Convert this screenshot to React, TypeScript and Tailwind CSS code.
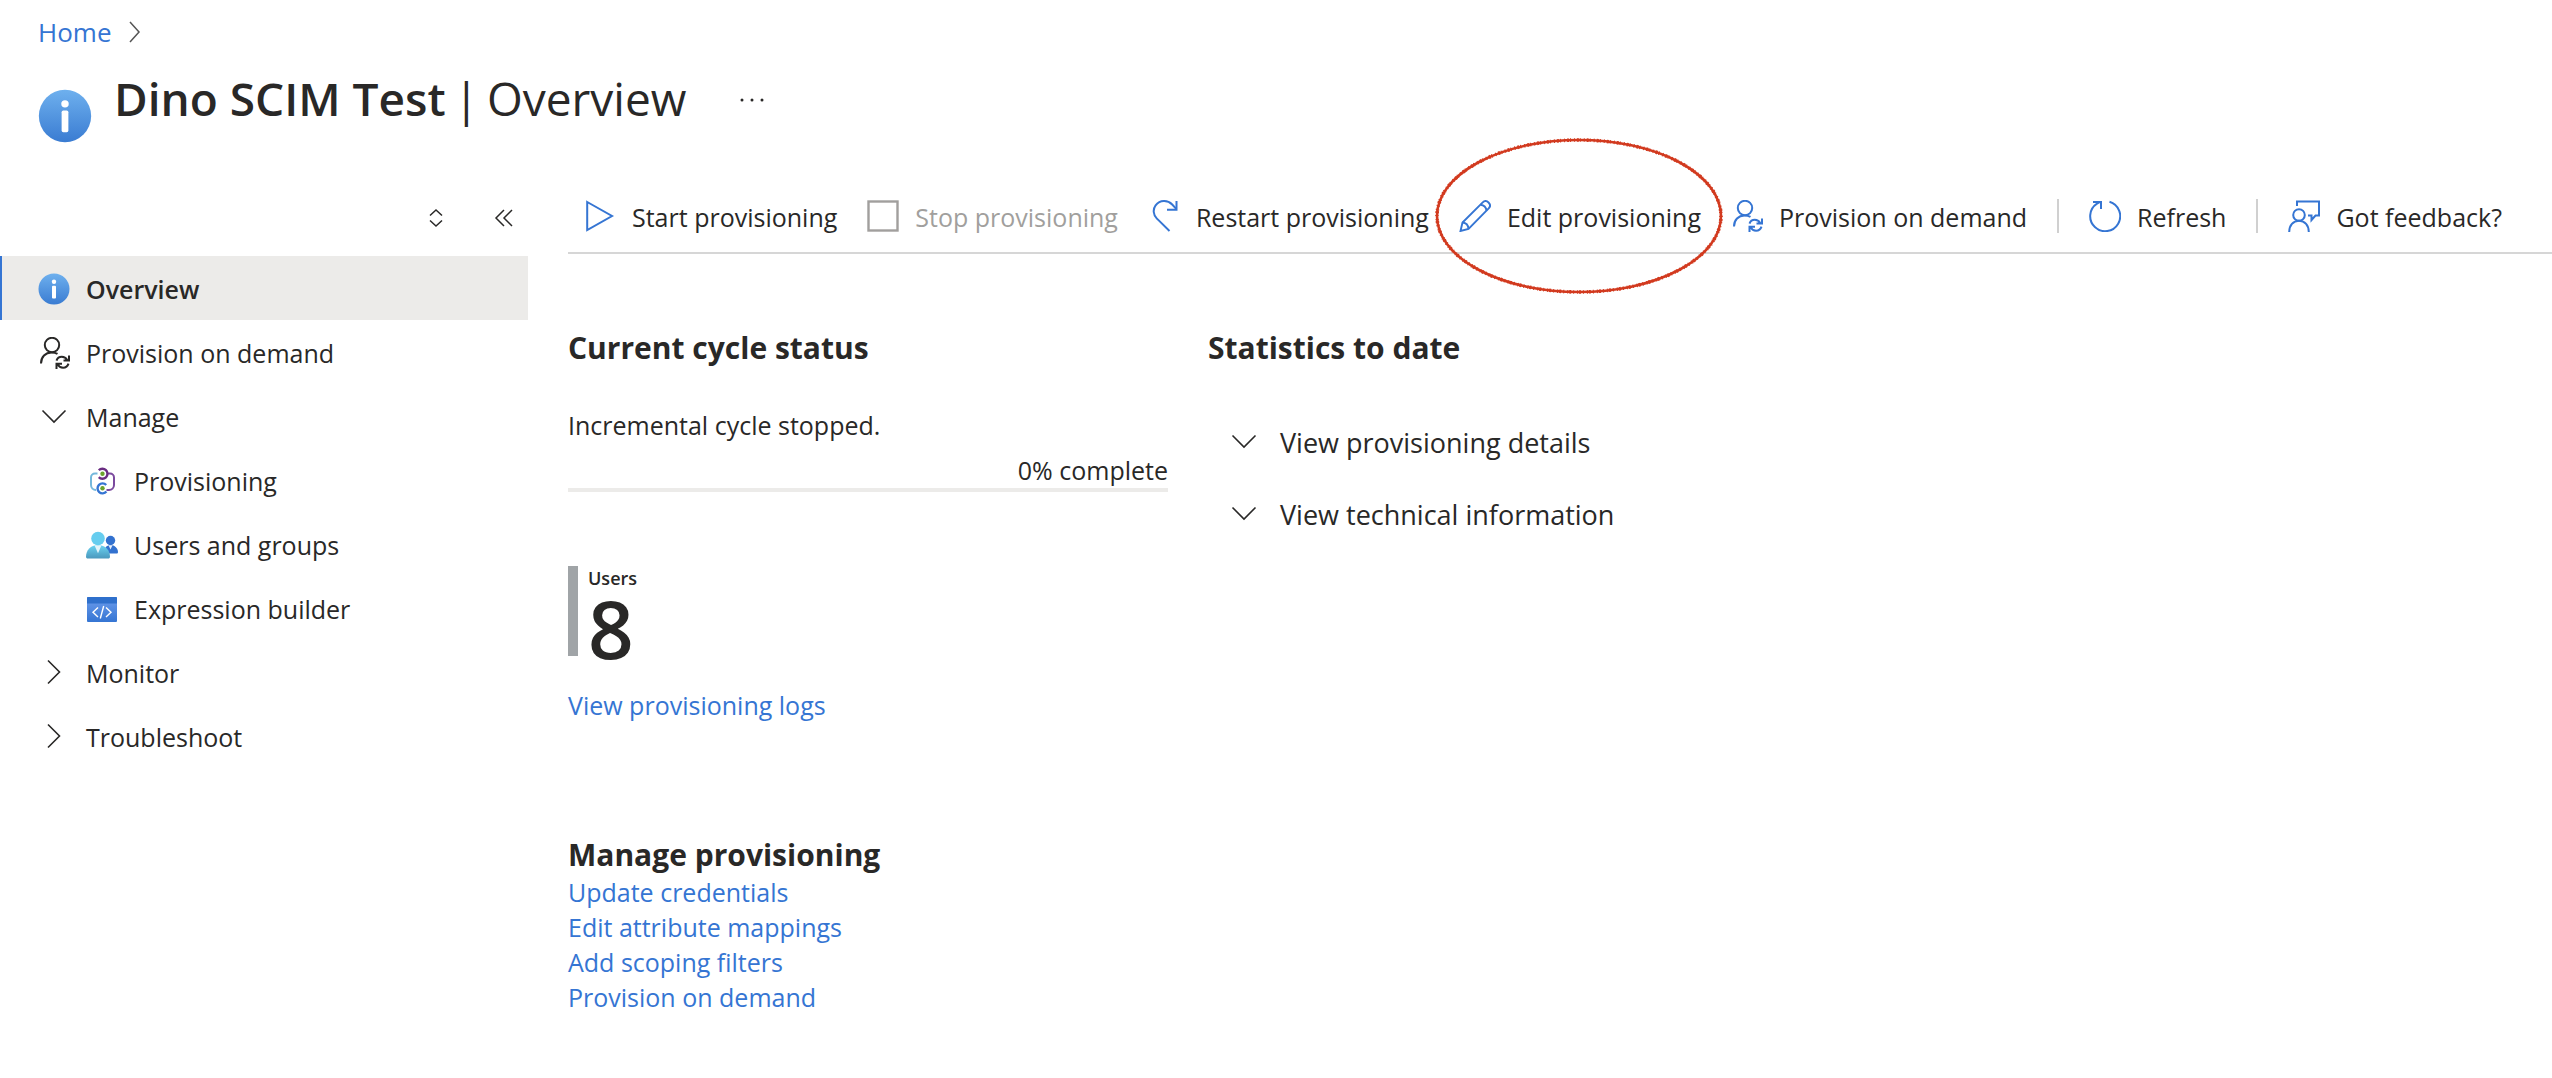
import { Fragment, type ReactNode } from "react";

type IconProps = { className?: string };

const InfoIcon = ({ className = "size-8" }: IconProps) => (
  <svg viewBox="0 0 32 32" className={className} aria-hidden="true">
    <defs>
      <linearGradient id="infoFill" x1="0" y1="0" x2="0" y2="1">
        <stop offset="0" stopColor="#6eb0ee" />
        <stop offset="1" stopColor="#3a7cd2" />
      </linearGradient>
    </defs>
    <circle cx="16" cy="16" r="15.5" fill="url(#infoFill)" />
    <circle cx="16" cy="8.8" r="2.2" fill="#fff" />
    <rect x="14" y="12.8" width="4" height="12.8" rx="1" fill="#fff" />
  </svg>
);

const ChevronDown = ({ className = "size-8" }: IconProps) => (
  <svg viewBox="0 0 32 32" className={className} fill="none" stroke="#292827" strokeWidth="1.6" aria-hidden="true">
    <path d="M4.5 9.5 16 21l11.5-11.5" />
  </svg>
);

const ChevronRight = ({ className = "size-8" }: IconProps) => (
  <svg viewBox="0 0 32 32" className={className} fill="none" stroke="#292827" strokeWidth="1.6" aria-hidden="true">
    <path d="M10 3.5 21.500 15 10 26.500" />
  </svg>
);

const PersonSyncIcon = ({ className = "size-8" }: IconProps) => (
  <svg viewBox="0 0 32 32" className={className} fill="none" stroke="currentColor" strokeWidth="2" aria-hidden="true">
    <circle cx="14" cy="8" r="7.2" />
    <path d="M3 26.500C3 20 7.500 15.400 13.500 15.400c2.4 0 4.4.5 6 1.5" />
    <path d="M18.500 23.600c.9-2.6 2.800-3.800 5.300-3.800 2.4 0 4.200 1.100 5.400 3.100M31 18.500v5h-5.500" />
    <path d="M30.500 26.600c-.9 2.8-2.800 4.100-5.400 4.100-2.4 0-4.300-1.100-5.400-3.100M18.500 32v-5.200H24" />
  </svg>
);

const ProvisioningIcon = ({ className = "size-8" }: IconProps) => (
  <svg viewBox="0 0 32 32" className={className} fill="none" strokeWidth="2" aria-hidden="true">
    <path d="M11.500 8.500H9a4 4 0 0 0-4 4v7.500a5 5 0 0 0 5 5" stroke="#74b8dc" />
    <path d="M22 8.500h2a4 4 0 0 1 4 4v7.500a5 5 0 0 1-5 5h-2.500" stroke="#7b4a9e" />
    <path d="M12.800 5.300a5 5 0 1 1 0 6.800" stroke="#6a2d82" strokeWidth="2.4" />
    <path d="M20.200 20a5 5 0 1 0 .2 6.600" stroke="#3575d3" strokeWidth="2.4" />
    <circle cx="16.5" cy="8.7" r="2.2" fill="#6ba32d" />
    <circle cx="16.5" cy="23.3" r="2.2" fill="#6ba32d" />
  </svg>
);

const UsersIcon = ({ className = "size-8" }: IconProps) => (
  <svg viewBox="0 0 32 32" className={className} aria-hidden="true">
    <defs>
      <linearGradient id="usersFill" x1="0" y1="0" x2="0" y2="1">
        <stop offset="0" stopColor="#6bd4f2" />
        <stop offset="1" stopColor="#4a98bd" />
      </linearGradient>
    </defs>
    <circle cx="24.5" cy="11.5" r="4.7" fill="#3271cf" />
    <path d="M18 24.500c0-5 2.200-8.500 6.500-8.500s7.500 3.500 7.500 7c0 1-.6 1.500-1.500 1.500z" fill="#3271cf" />
    <path d="M22.500 16.300h4l-2 4.200z" fill="#e6eefb" />
    <path d="M1.800 29.500C.7 29.500 0 28.800 0 27.700 0 21.500 4.500 16 12 16s12 5.500 12 11.700c0 1.100-.7 1.800-1.800 1.800z" fill="url(#usersFill)" />
    <path d="M8.500 16.300h7l-3.500 8z" fill="#e3f4fa" />
    <circle cx="12" cy="9.5" r="6.8" fill="#66cdef" />
  </svg>
);

const ExpressionIcon = ({ className = "size-8" }: IconProps) => (
  <svg viewBox="0 0 32 32" className={className} aria-hidden="true">
    <defs>
      <linearGradient id="exprFill" x1="0" y1="0" x2="0" y2="1">
        <stop offset="0" stopColor="#6d9dec" />
        <stop offset="1" stopColor="#3575d3" />
      </linearGradient>
    </defs>
    <rect x="1" y="4" width="30" height="25" rx="1" fill="url(#exprFill)" />
    <path d="M1 10.500V5a1 1 0 0 1 1-1h28a1 1 0 0 1 1 1v5.500z" fill="#2f70cc" />
    <path d="m12 14.500-5 4.700 5 4.700M20 14.500l5 4.700-5 4.700M17.700 13l-3.400 12.500" fill="none" stroke="#fff" strokeWidth="1.4" />
  </svg>
);

const PlayIcon = () => (
  <svg viewBox="0 0 32 32" className="size-8" fill="none" stroke="currentColor" strokeWidth="2" aria-hidden="true">
    <path d="M3.200 2 28 16 3.200 30z" />
  </svg>
);

const StopIcon = () => (
  <svg viewBox="0 0 32 32" className="size-8" fill="none" stroke="currentColor" strokeWidth="2.4" aria-hidden="true">
    <rect x="1.5" y="1.5" width="29" height="29" />
  </svg>
);

const RestartIcon = () => (
  <svg viewBox="0 0 32 32" className="size-8" fill="none" stroke="currentColor" strokeWidth="2" aria-hidden="true">
    <path d="M21.500 31 8.700 18.400C5.200 14.800 4.700 9.300 7.600 5.400c4.400-5.700 12-5.600 16.600-.9l4 4.400" />
    <path d="M28.500 1v8.800H19" />
  </svg>
);

const PencilIcon = () => (
  <svg viewBox="0 0 32 32" className="size-8" fill="none" stroke="currentColor" strokeWidth="1.9" aria-hidden="true">
    <path d="M1.500 31 3.500 22.500 23.700 2.300c1.900-1.900 4.100-1.500 5.800.2s2.100 4 .2 5.900L9.500 28.800z" />
    <path d="M3.500 22.500c3.500.3 5.700 2.700 6 6.300M21.500 4.700c3.500.4 5.600 2.600 6 6" />
  </svg>
);

const RefreshIcon = () => (
  <svg viewBox="0 0 32 32" className="size-8" fill="none" stroke="currentColor" strokeWidth="2" aria-hidden="true">
    <path d="M20.500 1.800A15 15 0 1 1 8 3.600L11 1.800" />
    <path d="M4 2h8v7" />
  </svg>
);

const FeedbackIcon = () => (
  <svg viewBox="0 0 32 32" className="size-8" fill="none" stroke="currentColor" strokeWidth="2" aria-hidden="true">
    <path d="M9 6V1.500h22v14h-3.500L23.500 20v-4.500H20" />
    <circle cx="11" cy="15" r="5.8" />
    <path d="M1.200 32c0-6.500 4-11.200 9.800-11.200S20.800 25.500 20.800 32" />
  </svg>
);

type Command = { label: string; icon: ReactNode; disabled?: boolean; circled?: boolean; divided?: boolean };

const commands: Command[] = [
  { label: "Start provisioning", icon: <PlayIcon /> },
  { label: "Stop provisioning", icon: <StopIcon />, disabled: true },
  { label: "Restart provisioning", icon: <RestartIcon /> },
  { label: "Edit provisioning", icon: <PencilIcon />, circled: true },
  { label: "Provision on demand", icon: <PersonSyncIcon /> },
  { label: "Refresh", icon: <RefreshIcon />, divided: true },
  { label: "Got feedback?", icon: <FeedbackIcon />, divided: true },
];

const menu = [
  { label: "Overview", icon: <InfoIcon />, selected: true },
  { label: "Provision on demand", icon: <PersonSyncIcon /> },
  { label: "Manage", icon: <ChevronDown /> },
  { label: "Provisioning", icon: <ProvisioningIcon />, nested: true },
  { label: "Users and groups", icon: <UsersIcon />, nested: true },
  { label: "Expression builder", icon: <ExpressionIcon />, nested: true },
  { label: "Monitor", icon: <ChevronRight /> },
  { label: "Troubleshoot", icon: <ChevronRight /> },
];

const manageLinks = ["Update credentials", "Edit attribute mappings", "Add scoping filters", "Provision on demand"];

const Header = () => (
  <header className="px-[38px]">
    <nav aria-label="Breadcrumb" className="flex h-16 items-center gap-4">
      <a href="#home" className="text-[26px] text-[#3575d3]">Home</a>
      <svg viewBox="0 0 16 24" className="h-6 w-4" fill="none" stroke="#555" strokeWidth="1.5" aria-hidden="true">
        <path d="m3 2 9 10-9 10" />
      </svg>
    </nav>
    <div className="flex h-28 items-start gap-[22px]">
      <InfoIcon className="mt-[25px] size-[54px]" />
      <h1 className="flex gap-2 text-[46px] leading-[68px]">
        <span className="font-semibold">Dino SCIM Test</span>
        <span>|</span>
        <span>Overview</span>
      </h1>
      <button type="button" aria-label="More" className="ml-6 flex h-[72px] w-10 items-center justify-center">
        <svg viewBox="0 0 24 4" className="h-1 w-6" fill="#292827" aria-hidden="true">
          <circle cx="2" cy="2" r="1.5" />
          <circle cx="12" cy="2" r="1.5" />
          <circle cx="22" cy="2" r="1.5" />
        </svg>
      </button>
    </div>
  </header>
);

const Sidebar = () => (
  <aside className="w-[528px] shrink-0">
    <div className="flex h-20 items-center justify-end gap-12 pt-1 pr-[14px]">
      <button type="button" aria-label="Expand all" className="size-5">
        <svg viewBox="0 0 20 20" className="size-5" fill="none" stroke="#292827" strokeWidth="1.5" aria-hidden="true">
          <path d="m4 7.500 6-5.500 6 5.500M4 12.500l6 5.500 6-5.500" />
        </svg>
      </button>
      <button type="button" aria-label="Collapse menu" className="size-5">
        <svg viewBox="0 0 20 20" className="size-5" fill="none" stroke="#292827" strokeWidth="1.5" aria-hidden="true">
          <path d="m10 2-8 8 8 8M18 2l-8 8 8 8" />
        </svg>
      </button>
    </div>
    <nav aria-label="Service menu">
      {menu.map((item) => (
        <a
          key={item.label}
          href="#menu"
          className={`flex h-16 items-center gap-4 border-l-2 pt-0.5 ${item.nested ? "pl-[84px]" : "pl-9"} ${
            item.selected ? "border-[#3575d3] bg-[#ecebe9] font-semibold" : "border-transparent"
          }`}
        >
          {item.icon}
          {item.label}
        </a>
      ))}
    </nav>
  </aside>
);

const Toolbar = () => (
  <div className="flex h-[78px] items-center gap-[30px] border-b-2 border-[#d6d6d6] pt-[3px] pl-4 whitespace-nowrap">
    {commands.map((cmd) => (
      <Fragment key={cmd.label}>
        {cmd.divided && <span className="h-[34px] w-0.5 bg-[#d0d0d0]" />}
        <button
          type="button"
          disabled={cmd.disabled}
          className={`relative flex items-center gap-4 ${cmd.disabled ? "text-[#a19f9d]" : ""}`}
        >
          <span className={cmd.disabled ? "" : "text-[#3575d3]"}>{cmd.icon}</span>
          <span className="pt-[3px]">{cmd.label}</span>
          {/* Hand-drawn highlight around the command */}
          {cmd.circled && (
            <svg viewBox="0 0 288 156" className="pointer-events-none absolute -inset-x-6 top-1/2 h-[156px] w-[288px] -translate-y-1/2" fill="none" aria-hidden="true">
              <ellipse cx="144" cy="78" rx="142" ry="76" stroke="#d23a1f" strokeWidth="2.6" />
              <ellipse cx="144" cy="78" rx="142" ry="76" stroke="#d23a1f" strokeWidth="3.6" strokeDasharray="1 2 2 1 1 3" />
            </svg>
          )}
        </button>
      </Fragment>
    ))}
  </div>
);

const CycleStatus = () => (
  <section className="w-[600px]">
    <h2 className="text-[30px] leading-10 font-bold">Current cycle status</h2>
    <p className="mt-10">Incremental cycle stopped.</p>
    <p className="mt-[10px] text-right">0% complete</p>
    <div className="h-1 bg-[#ecebe9]" role="progressbar" aria-valuenow={0} aria-label="Cycle progress" />
    <div className="mt-[74px] flex h-[90px] gap-[10px]">
      <div className="w-[10px] bg-[#a0a4a7]" />
      <div>
        <div className="text-[18px] leading-6 font-semibold">Users</div>
        <div className="text-[80px] leading-[76px] font-semibold">8</div>
      </div>
    </div>
    <a href="#logs" className="mt-8 block text-[#3575d3]">View provisioning logs</a>
    <h2 className="mt-28 text-[30px] leading-10 font-bold">Manage provisioning</h2>
    <ul>
      {manageLinks.map((label) => (
        <li key={label}>
          <a href="#manage" className="text-[#3575d3]">{label}</a>
        </li>
      ))}
    </ul>
  </section>
);

const Statistics = () => (
  <section>
    <h2 className="text-[30px] leading-10 font-bold">Statistics to date</h2>
    <div className="mt-[38px] pl-5">
      {["View provisioning details", "View technical information"].map((label) => (
        <button key={label} type="button" className="flex h-[72px] items-center gap-5 text-[27px]">
          <ChevronDown />
          {label}
        </button>
      ))}
    </div>
  </section>
);

export default function App() {
  return (
    <div className="min-h-screen bg-white font-['Open_Sans',sans-serif] text-[25px] leading-[35px] text-[#292827]">
      <Header />
      <div className="flex">
        <Sidebar />
        <main className="ml-10 min-w-0 flex-1">
          <Toolbar />
          <div className="flex gap-10 pt-[74px]">
            <CycleStatus />
            <Statistics />
          </div>
        </main>
      </div>
    </div>
  );
}
